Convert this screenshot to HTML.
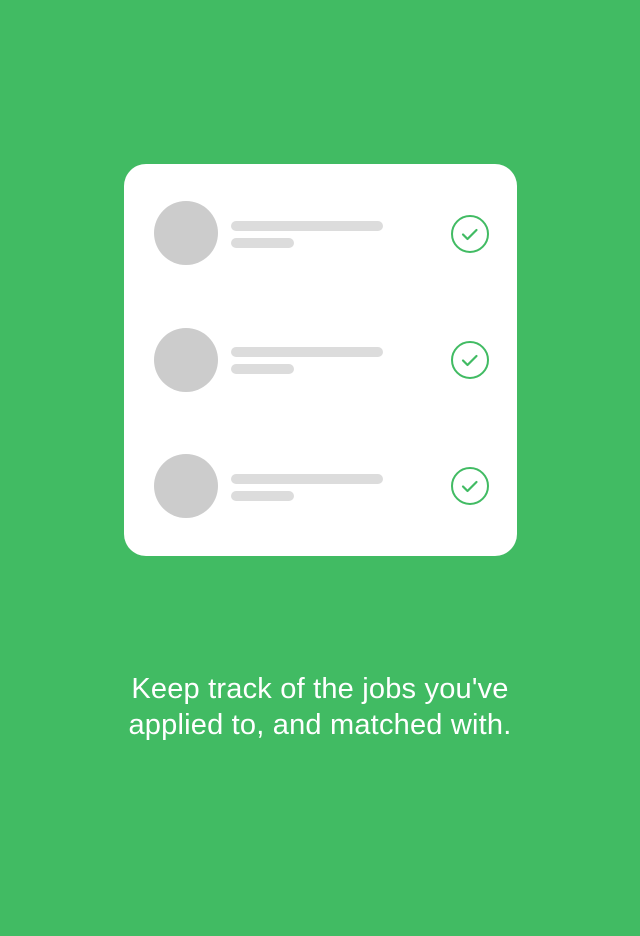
<!DOCTYPE html>
<html><head><style>
body{margin:0;width:640px;height:936px;background:#41bb63;position:relative;overflow:hidden;font-family:"Liberation Sans",sans-serif}
.card{position:absolute;left:124px;top:164px;width:393px;height:392px;background:#fff;border-radius:22px}
.av{position:absolute;left:30px;width:64px;height:64px;border-radius:50%;background:#cccccc}
.l1{position:absolute;left:107px;width:152px;height:10px;border-radius:5px;background:#dcdcdc}
.l2{position:absolute;left:107px;width:63px;height:10px;border-radius:5px;background:#dcdcdc}
svg{position:absolute;left:326px}
.t{position:absolute;top:671px;left:0;width:640px;text-align:center;color:#fff;font-size:29px;line-height:36px;letter-spacing:0.2px}
</style></head><body>
<div class="card">
<div class="av" style="top:37px"></div><div class="l1" style="top:57px"></div><div class="l2" style="top:74px"></div>
<svg style="top:50px" width="40" height="40" viewBox="0 0 40 40"><circle cx="20" cy="20" r="18" fill="none" stroke="#41bb63" stroke-width="2"/><path d="M13 20.5l4.5 4.5 9-9" fill="none" stroke="#41bb63" stroke-width="2.2" stroke-linecap="round" stroke-linejoin="round"/></svg>
<div class="av" style="top:164px"></div><div class="l1" style="top:183px"></div><div class="l2" style="top:200px"></div>
<svg style="top:176px" width="40" height="40" viewBox="0 0 40 40"><circle cx="20" cy="20" r="18" fill="none" stroke="#41bb63" stroke-width="2"/><path d="M13 20.5l4.5 4.5 9-9" fill="none" stroke="#41bb63" stroke-width="2.2" stroke-linecap="round" stroke-linejoin="round"/></svg>
<div class="av" style="top:290px"></div><div class="l1" style="top:310px"></div><div class="l2" style="top:327px"></div>
<svg style="top:302px" width="40" height="40" viewBox="0 0 40 40"><circle cx="20" cy="20" r="18" fill="none" stroke="#41bb63" stroke-width="2"/><path d="M13 20.5l4.5 4.5 9-9" fill="none" stroke="#41bb63" stroke-width="2.2" stroke-linecap="round" stroke-linejoin="round"/></svg>
</div>
<div class="t">Keep track of the jobs you've<br>applied to, and matched with.</div>
</body></html>
